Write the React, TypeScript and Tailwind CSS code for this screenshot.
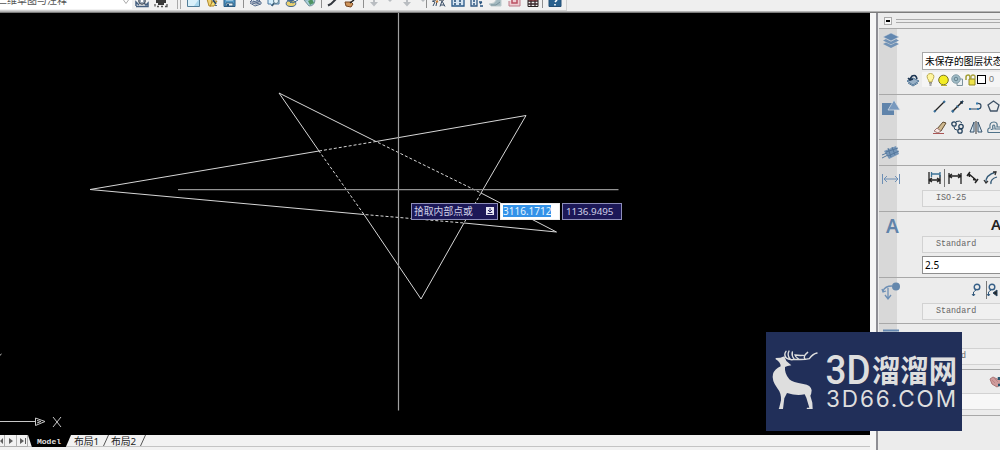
import type { ReactNode } from "react";

const cjk = "font-['Noto_Sans','Noto_Sans_CJK_SC',sans-serif]";
const mono = "font-['Liberation_Mono',monospace]";

function Icon({ w, h, className = "", children }: { w: number; h: number; className?: string; children: ReactNode }) {
  return (
    <svg
      width={w}
      height={h}
      viewBox={`0 0 ${w} ${h}`}
      fill="none"
      stroke="#27445f"
      className={`shrink-0 overflow-visible ${className}`}
    >
      {children}
    </svg>
  );
}

function Sep() {
  return <div className="h-[8px] w-px shrink-0 bg-[#8f8f8f]" />;
}

function Toolbar() {
  return (
    <header className="h-[13px] w-full shrink-0 overflow-hidden border-b border-[#7c7c7c] bg-[#efefef]">
      <div className="flex h-[12px] w-full border-b border-[#b4b4b4]">
      <div className="flex h-[11px] w-[567px] border-r border-b border-[#d0d0d0] bg-[#f1f1f1]">
        <div className="flex h-[9px] w-[132px] shrink-0 justify-between overflow-hidden bg-white">
          <span className={`-mt-[7px] -ml-[3px] text-[10px] leading-[14px] whitespace-nowrap text-[#555] ${cjk}`}>
            二维草图与注释
          </span>
          <Icon w={6} h={5} className="mr-[3px]">
            <path d="M0.5 0L3 3.5L5.5 0" stroke="#aaa" />
          </Icon>
        </div>
        <div className="flex w-[45px] shrink-0 gap-[5px] pl-[3px]">
          <Icon w={14} h={7}>
            <path d="M1 6.5H13V3L11 5L9 3M1 6V2L4 5" stroke="#466080" strokeWidth="1.5" />
            <circle cx="7" cy="1" r="3.3" fill="#9aa6b5" stroke="#39434f" />
            <path d="M6 0H8V2H6Z" fill="#fff" stroke="none" />
          </Icon>
          <Icon w={14} h={7}>
            <path d="M2 0H12V3H10V5H4V3H2Z" fill="#383838" stroke="none" />
            <path d="M1 4V6.5M3 6.5H5M7 6.5H9M11 6.5H13V4" stroke="#555" strokeWidth="1.3" />
          </Icon>
        </div>
        <div className="flex w-[66px] shrink-0">
          <Icon w={10} h={9}>
            <path d="M0.5 0V9M3.5 0V9" stroke="#aaa" />
          </Icon>
          <Icon w={14} h={7}>
            <path d="M0.5 -2H12.5V6.5H0.5Z" fill="#d9f0fa" stroke="#527e99" />
            <path d="M7 6H12V-1Z" fill="#a9d7ed" stroke="none" />
          </Icon>
          <Icon w={18} h={7} className="ml-[4px]">
            <path d="M2 -1H7L6 6H4Z" fill="#eed172" stroke="#b28b2e" />
            <path d="M5 6L8 1H12L9 6Z" fill="#f3df76" stroke="#ad852d" />
            <path d="M8 0L11 4M11 5V6" stroke="#24466b" strokeWidth="1.6" />
          </Icon>
          <Icon w={14} h={7}>
            <path d="M1 -2V6.5H12V-2" fill="#5499c5" stroke="#275b85" />
            <path d="M3 3H10V6H3Z" fill="#e9f3f8" stroke="#315b7b" />
            <path d="M5 4V6" stroke="#245580" strokeWidth="2" />
            <path d="M3 0H10" stroke="#d7e9f3" />
          </Icon>
        </div>
        <Sep />
        <div className="flex w-[77px] shrink-0 gap-[4px] pl-[5px]">
          <Icon w={14} h={7}>
            <path d="M1 2L4 -1H11L10 2Z" fill="#dae4ee" stroke="#57698c" />
            <path d="M1 3L6 6L12 4V2L7 0M3 3Q7 5 11 3M4 1L9 3" stroke="#536a8b" />
          </Icon>
          <Icon w={14} h={7}>
            <path d="M1 -1V4H4L5 6L6 4H12V-1" fill="#d6effc" stroke="#4878a2" />
            <circle cx="9" cy="1" r="2.5" fill="#eaf5f8" stroke="#55798c" />
            <path d="M7 3L5 6" stroke="#405e75" strokeWidth="1.5" />
          </Icon>
          <Icon w={14} h={7}>
            <ellipse cx="6" cy="3.5" rx="4.8" ry="3" fill="#ebd16f" stroke="#3e638e" />
            <path d="M2 0L8 3L13 0M5 3L11 -2" stroke="#376692" />
          </Icon>
          <Icon w={14} h={7}>
            <path d="M1 0L6 6Q12 6 12 -1Z" fill="#a8d0da" stroke="#718f9a" />
            <path d="M5 1L9 -1L11 3L7 5Z" fill="#4f9363" stroke="none" />
          </Icon>
        </div>
        <Sep />
        <div className="flex w-[41px] shrink-0 gap-[5px] pl-[6px]">
          <Icon w={12} h={7}>
            <path d="M0 5.5L3 4L8 -1" stroke="#31363d" strokeWidth="2" />
          </Icon>
          <Icon w={13} h={7}>
            <path d="M0 2H6L8 4L6 7L1 6Z" fill="#cf955b" stroke="#744421" />
            <path d="M5 3L9 0" stroke="#222" strokeWidth="1.5" />
          </Icon>
        </div>
        <Sep />
        <div className="flex w-[62px] shrink-0 gap-[11px] pl-[5px]">
          {[0, 1].map((n) => (
            <Icon key={n} w={22} h={7}>
              <path d="M1 2H9L5 6.5Z" fill="#b9bdc1" stroke="none" />
              <path d="M5 -1V3" stroke="#b9bdc1" strokeWidth="2" />
              <path d="M19 0H23L21 2Z" fill="#b9bdc1" stroke="none" />
            </Icon>
          ))}
        </div>
        <Sep />
        <div className="flex w-[115px] shrink-0 gap-[5px] pl-[5px]">
          <Icon w={14} h={7}>
            <path d="M0 1L3 2L1 6M5 1L4 6M8 6.5L10 1L13 6.5M9 5H12" stroke="#374b64" />
            <path d="M1 0H4M7 0H12" stroke="#555f6b" strokeWidth="1.5" />
            <path d="M4 2L6 1" stroke="#c77d35" strokeWidth="2" />
          </Icon>
          <Icon w={14} h={7}>
            <path d="M1 -1V6H13V-1" fill="#d5e4f2" stroke="#285888" strokeWidth="1.3" />
            <path d="M3 1H5M8 1H10M3 4H5M8 4H10" stroke="#254c75" strokeWidth="1.5" />
          </Icon>
          <Icon w={14} h={7}>
            <path d="M1 -1V6H7V-1" fill="#e0e9f2" stroke="#315882" strokeWidth="1.3" />
            <path d="M3 1H5M3 4H5M9 2H12M10 6H13M12 2L10 4" stroke="#29537f" strokeWidth="1.3" />
          </Icon>
          <Icon w={14} h={7}>
            <path d="M0 4L5 3L8 -1H12V6H2Z" fill="#a3b9c0" stroke="#bdcacd" />
            <path d="M2 5H7L11 2" stroke="#7a929c" />
          </Icon>
          <Icon w={14} h={7}>
            <path d="M1 1V6H12V-1" fill="#eecdd2" stroke="#bd7b88" />
            <path d="M4 -1V3H9V-1" stroke="#bb5062" strokeWidth="1.5" />
          </Icon>
          <Icon w={14} h={7}>
            <path d="M1 -1V6.5H11V-1" fill="#eee" stroke="#262020" />
            <path d="M1 1H11M1 4H11M4 -1V6M8 -1V6" stroke="#38272a" strokeWidth="1.3" />
            <path d="M2 0H10" stroke="#9b3038" />
          </Icon>
        </div>
        <Sep />
        <Icon w={14} h={7} className="ml-[6px]">
          <path d="M0 -2H12V6.5H0Z" fill="#29608d" stroke="#234e74" />
          <path d="M6 2L8 0M6 4V5.5" stroke="#fff" strokeWidth="1.6" />
        </Icon>
      </div>
      </div>
    </header>
  );
}

function Drawing() {
  return (
    <svg width="870" height="422" viewBox="0 13 870 422" fill="none" className="block">
      {/* star, the inner pentagon is the highlighted selection */}
      <g stroke="#d6d6d6" strokeWidth="1">
        <path d="M319 151L279 93L376 141.5L526 115.5L481 193L556.5 232L464 223L421 299L364 214.5L90 189.5L319 151" />
        <path d="M319 151L376 141.5L481 193L464 223L364 214.5Z" strokeDasharray="3 2" />
      </g>
      <path d="M398.5 13V410.5" stroke="#a0a0a0" strokeWidth="1.2" />
      <path d="M178 189.7H618.5" stroke="#929292" strokeWidth="1.3" />
      <g stroke="#c8c8c8">
        <path d="M0 421.5H35M35.5 418L45 421.5L35.5 425.5ZM37 420.5L41 421.5L37 423" />
        <path d="M53 417L61 427M61 417L53 427" />
        <path d="M-2 357L1.5 354" />
      </g>
    </svg>
  );
}

function DynamicInput() {
  return (
    <div className={`absolute top-[190px] left-[411px] flex h-[17px] gap-[2px] text-[10px] leading-[15px] ${cjk}`}>
      <div className="flex w-[87px] items-center justify-between border border-[#8d8dba] bg-[#1c1857] pr-[3px] pl-[2px] text-[#d0d0e8]">
        <span className="text-[9.8px] whitespace-nowrap">拾取内部点或</span>
        <Icon w={8} h={8} className="-mt-[2px]">
          <path d="M0 0H8V8H0Z" fill="#e6e6f4" stroke="none" />
          <path d="M4 1V4M2 3L4 5L6 3M1.5 6.5H6.5" stroke="#25205f" />
        </Icon>
      </div>
      <div className="flex w-[60px] items-center border border-[#eee] bg-white pl-[2px]">
        <span className="-mt-px h-[12px] bg-[#3392e8] leading-[12px] text-[#e8f6ff]">3116.1712</span>
      </div>
      <div className="w-[60px] border border-[#8d8dba] bg-[#1c1857] pl-[3px] text-[9.8px] text-[#d0d0e8]">
        1136.9495
      </div>
    </div>
  );
}

function LayoutTabs() {
  return (
    <div className={`flex h-[15px] w-full bg-[#f2f2f2] text-[9.8px] leading-[13px] text-[#222] ${cjk}`}>
      <div className="flex h-[12px] w-full border-b border-[#c4c4c4]">
        <Icon w={28} h={12}>
          <path d="M4.5 0V11.5M16.5 0V11.5M27.5 0V11.5M0 11.5H28" stroke="#b0b0b0" />
          <path d="M3 3V9L0 6ZM9 3V9L13 6ZM20 3V9L24 6Z" fill="#606060" stroke="none" />
          <path d="M25.5 3V9" stroke="#606060" />
        </Icon>
        <div
          className={`h-[12px] w-[43px] shrink-0 bg-black pl-[9px] text-[8px] leading-[13px] font-bold text-[#e2e2e2] [clip-path:polygon(0_0,100%_0,88%_100%,9%_100%)] ${mono}`}
        >
          Model
        </div>
        <span className="ml-[3px] w-[29px] whitespace-nowrap">布局1</span>
        <Icon w={6} h={12}>
          <path d="M5.5 0L0.5 11" stroke="#555" />
        </Icon>
        <span className="ml-[2px] w-[29px] whitespace-nowrap">布局2</span>
        <Icon w={6} h={12}>
          <path d="M5.5 0L0.5 11" stroke="#555" />
        </Icon>
      </div>
    </div>
  );
}

function Section({ height, icon, children }: { height: string; icon?: ReactNode; children?: ReactNode }) {
  return (
    <section className={`flex w-full shrink-0 overflow-hidden border-t border-[#a8a8a8] ${height}`}>
      <div className="w-[18px] shrink-0 bg-[#d8d8d8] pt-[4px] pl-[3px]">{icon}</div>
      <div className="min-w-0 flex-1 overflow-hidden">{children}</div>
    </section>
  );
}

function StyleBox({ children, className = "" }: { children?: ReactNode; className?: string }) {
  return (
    <div
      className={`ml-[25px] h-[17px] w-[90px] border border-[#d2d2d2] bg-[#f0f0f0] pl-[13px] text-[8.4px] leading-[15px] text-[#666] ${mono} ${className}`}
    >
      {children}
    </div>
  );
}

function LeaderIcon() {
  return (
    <Icon w={9} h={14}>
      <circle cx="5" cy="4" r="2.8" strokeWidth="1.4" stroke="#365f87" />
      <path d="M4 7L1.5 9V13M0 11L1.5 13L3 11" stroke="#33597c" />
    </Icon>
  );
}

function Palette() {
  return (
    <aside className="flex w-[122px] shrink-0 flex-col overflow-hidden bg-[#ececec]">
      <div className="flex h-[15px] shrink-0 items-center gap-[4px] pl-[6px]">
        <div className="flex h-[8px] w-[8px] items-center justify-center border border-[#aaa] bg-[#f6f6f6]">
          <div className="h-[2px] w-[4px] bg-black" />
        </div>
        <div className="h-[4px] flex-1 border-y border-[#aaa]" />
      </div>
      <div className="ml-px flex min-h-0 flex-1 flex-col">
        <Section
          height="h-[66px]"
          icon={
            <Icon w={18} h={16}>
              <path d="M1 11L9 15L17 11L14 9.5L9 12L4 9.5Z" fill="#7192b6" stroke="none" />
              <path d="M1 7.5L9 11.5L17 7.5L14 6L9 8.5L4 6Z" fill="#7192b6" stroke="none" />
              <path d="M1 4L9 0L17 4L9 8Z" fill="#6287b0" stroke="#d8dde3" strokeWidth="0.5" />
            </Icon>
          }
        >
          <div
            className={`mt-[23px] ml-[25px] h-[18px] w-[90px] border border-[#a7a7a7] bg-white pl-[2px] text-[9.7px] leading-[17px] whitespace-nowrap text-black ${cjk}`}
          >
            未保存的图层状态
          </div>
          <div className="mt-[2px] flex h-[15px] items-center">
            <Icon w={14} h={14} className="ml-[9px]">
              <path d="M1 8L7 5L13 8L7 12Z" fill="#99b1c7" stroke="#527899" />
              <path d="M2 10L7 13L12 10" stroke="#527899" />
              <path d="M11 6Q10 1 6 3L4 6M2 5L4 7L7 6" stroke="#1c3552" strokeWidth="1.6" />
            </Icon>
            <div className="ml-[2px] flex h-[15px] w-[81px] items-center bg-[#f5f5f5] pl-[4px]">
              <Icon w={9} h={13}>
                <path d="M3 9Q3 7 1.5 5.5Q0 1 4.5 0.5Q9 1 7.5 5.5Q6 7 6 9Z" fill="#fff59e" stroke="#b7a84e" />
                <path d="M3 10H6M3.5 12H5.5" stroke="#555" />
              </Icon>
              <Icon w={12} h={12} className="ml-[3px]">
                <circle cx="5.5" cy="6" r="4.8" fill="#f3ed25" stroke="#777228" />
                <path d="M3 11.5H9" stroke="#b7ae33" />
              </Icon>
              <Icon w={13} h={12} className="ml-[1px]">
                <path d="M6 5H11.5V11.5H6Z" fill="#e9eff2" stroke="#7c929c" />
                <circle cx="5" cy="5" r="4.2" fill="#a2bec9" stroke="#829ba5" />
                <circle cx="5" cy="5" r="1.8" stroke="#66838f" />
              </Icon>
              <Icon w={12} h={12} className="ml-[1px]">
                <path d="M1 6V3Q1 1 3.5 1Q5 1 5 4V6" stroke="#a29e34" strokeWidth="1.5" />
                <path d="M4 5H10V11H4Z" fill="#eee34b" stroke="#8f8725" />
                <path d="M6 5V2Q8 0 10 2V5" stroke="#a8a13e" strokeWidth="1.3" />
              </Icon>
              <div className="h-[9px] w-[9px] shrink-0 border border-black bg-white" />
              <span className="ml-[3px] text-[9px] text-[#777] font-['Liberation_Sans',sans-serif]">0</span>
            </div>
          </div>
        </Section>

        <Section
          height="h-[45px]"
          icon={
            <Icon w={18} h={15} className="mt-[2px]">
              <path d="M0 2H12V14H0Z" fill="#6084ab" stroke="none" />
              <path d="M12 -1L18 9H6Z" fill="#7899be" stroke="#dce2e8" strokeWidth="0.7" />
            </Icon>
          }
        >
          <div className="mt-[4px] ml-[36px] grid grid-cols-[18px_18px_18px_18px] gap-y-[7px]">
            <Icon w={14} h={14}>
              <path d="M2 12L11 3" stroke="#222" strokeWidth="1.3" />
              <path d="M1 13L2.5 11.5M10.5 3.5L12 2" stroke="#386f9a" strokeWidth="2.2" />
            </Icon>
            <Icon w={14} h={14}>
              <path d="M1 13L12 2" stroke="#222" strokeWidth="1.4" />
              <path d="M9 3L12 2L11 5" fill="#222" />
              <path d="M1 13L2.5 11.5M6 8L7 7" stroke="#386f9a" strokeWidth="2.5" />
            </Icon>
            <Icon w={14} h={14}>
              <path d="M1 10H9Q12 10 12 7Q12 4 8 4.5" stroke="#304961" strokeWidth="1.2" />
              <path d="M0 10H2M8 10H10M7 4.5H9" stroke="#397bab" strokeWidth="2" />
            </Icon>
            <Icon w={14} h={14}>
              <path d="M6.5 2L12 6L10 12H3.5L1 6Z" stroke="#405367" strokeWidth="1.3" />
            </Icon>
            <Icon w={14} h={14}>
              <path d="M4 9L10 2L13 3L8 11Z" fill="#cfb98f" stroke="#5e4b31" />
              <path d="M4 8L8 11L5 13L1 11Z" fill="#fae8e3" stroke="#a07c78" />
              <path d="M0 13.5H11" stroke="#a55" />
            </Icon>
            <Icon w={14} h={14}>
              <circle cx="3" cy="4" r="2.2" strokeWidth="1.3" />
              <circle cx="10" cy="6.5" r="2.2" strokeWidth="1.3" />
              <circle cx="9" cy="11" r="2.2" strokeWidth="1.3" />
              <path d="M5 1.5Q9 0 11 3M3 7Q3 10 6 10" />
            </Icon>
            <Icon w={14} h={14}>
              <path d="M5 2V12H1ZM9 2V12H13Z" fill="#dceaf2" stroke="#35516a" />
              <path d="M7 1V14" stroke="#333" />
            </Icon>
            <Icon w={14} h={14}>
              <path d="M1 12.5H13M1 12.5Q0 8 3 8Q2 2 7 2Q11 2 10 7H13M4 10Q4 9 6 9Q5 5 7 5Q8 5 8 9H13" stroke="#4f7289" strokeWidth="1.2" />
            </Icon>
          </div>
        </Section>

        <Section
          height="h-[26px]"
          icon={
            <Icon w={18} h={15} className="mt-[2px]">
              <path d="M2 5L14 0L17 8L7 13Z" fill="#7595b7" stroke="none" />
              <path d="M0 9L5 7M0 12L6 9M6 2L9 11M10 1L13 9M4 6L16 2M6 10L17 5" stroke="#55789d" />
            </Icon>
          }
        />

        <Section
          height="h-[46px]"
          icon={
            <Icon w={18} h={12} className="mt-[4px]">
              <path d="M0.5 0V10M17.5 0V10M2 5H16M5 2L2 5L5 8M13 2L16 5L13 8" stroke="#6d8fb5" />
            </Icon>
          }
        >
          <div className="mt-[4px] ml-[31px] flex h-[16px] items-center">
            <Icon w={13} h={14}>
              <path d="M1 1V13M12 4V13M1 9H12M4 7L1 9L4 11M9 7L12 9L9 11" stroke="#222" strokeWidth="1.3" />
              <path d="M3 3H12M3.5 1V6M12 1V6" stroke="#3a7196" strokeWidth="1.3" />
            </Icon>
            <div className="ml-[3px] h-[18px] w-px shrink-0 bg-[#777]" />
            <Icon w={14} h={14} className="ml-[3px]">
              <path d="M1 2V13M13 2V13M1 5H13M4 3L1 5L4 7M10 3L13 5L10 7" stroke="#222" strokeWidth="1.3" />
            </Icon>
            <Icon w={14} h={14} className="ml-[4px]">
              <path d="M3 3L10 9M1 5L4 1M9 12L12 8M3 3L3.5 6M10 9L7 8.5" stroke="#222" strokeWidth="1.5" />
            </Icon>
            <Icon w={14} h={14} className="ml-[4px]">
              <path d="M2 12Q1 4 12 1M7 13Q6 8 13 6" stroke="#355b78" strokeWidth="1.3" />
              <path d="M0 9L2 12L4 10M9 1H12L11 4" stroke="#333" strokeWidth="1.3" />
            </Icon>
          </div>
          <StyleBox className="mt-[4px]">ISO-25</StyleBox>
        </Section>

        <Section
          height="h-[66px]"
          icon={
            <div className="pl-[4px] text-[19px] leading-[20px] font-semibold text-[#6083aa] font-['Noto_Sans',sans-serif]">
              A
            </div>
          }
        >
          <div className="mt-[5px] ml-[94px] h-[15px] text-[15px] leading-[15px] font-semibold text-[#222] font-['Noto_Sans',sans-serif]">
            A
          </div>
          <StyleBox className="mt-[4px]">Standard</StyleBox>
          <div className="mt-[3px] ml-[25px] h-[18px] w-[90px] border border-[#8f8f8f] bg-white pl-[2px] text-[10px] leading-[17px] text-black font-['Noto_Sans',sans-serif]">
            2.5
          </div>
        </Section>

        <Section
          height="h-[46px]"
          icon={
            <Icon w={18} h={18}>
              <circle cx="14" cy="4.5" r="4" fill="#6588ad" stroke="none" />
              <path d="M10 4Q3 4 1 9M0 7L1 10L4 9M6 6V16M3 13L6 17L9 13" stroke="#6d8fb5" strokeWidth="1.3" />
            </Icon>
          }
        >
          <div className="mt-[3px] ml-[75px] flex h-[18px] items-center">
            <LeaderIcon />
            <div className="ml-[5px] h-[18px] w-px shrink-0 bg-[#777]" />
            <LeaderIcon />
            <Icon w={6} h={14} className="-ml-[3px]">
              <path d="M0 10L4 7V13Z" fill="#222" />
            </Icon>
          </div>
          <StyleBox className="mt-[4px]">Standard</StyleBox>
        </Section>

        <Section
          height="h-[46px]"
          icon={
            <Icon w={18} h={16}>
              <path d="M1 1.5H17V3.5H1Z" fill="#6588b0" stroke="none" />
              <path d="M1 5H17V14H1ZM6 5V14M12 5V14M1 9H17" stroke="#8ba5c0" />
            </Icon>
          }
        >
          <StyleBox className="mt-[24px] pl-[38px]!">d</StyleBox>
        </Section>

        <Section height="h-[46px]">
          <Icon w={14} h={14} className="mt-[5px] ml-[92px]">
            <path d="M1 4L4 2L8 4L12 5L11 10L8 12L3 9Z" fill="#cf9b9b" stroke="#aa7777" />
            <path d="M3 5L6 8M5 3L9 7" stroke="#b98585" />
            <path d="M10 2V5M9 10H14" stroke="#265670" strokeWidth="2.5" />
          </Icon>
          <div className="mt-[4px] ml-[25px] h-[17px] w-[90px] border border-[#d2d2d2] bg-[#f7f7f7]" />
        </Section>
        <div className="flex-1 border-t border-[#a8a8a8]" />
      </div>
    </aside>
  );
}

function Watermark() {
  return (
    <div className="absolute top-[332px] left-[766px] h-[99px] w-[196px] bg-[#212f59]">
      <svg width="196" height="98" viewBox="0 0 196 98" fill="#dedede" className="block">
        <g transform="translate(-11 -7) scale(.33333)">
          <path d="M62 99L76 98L88 94L94 108L109 121Q96 123 90 126Q88 145 103 163Q113 173 145 177Q168 180 170 196Q169 209 166 212L172 233L173 252H155L156 248H163L154 218L149 208Q126 214 96 204L88 220L84 252H71L73 247L78 226Q79 204 67 190Q49 165 54 147Q59 132 77 124Q77 112 62 103Z" />
          <path
            d="M91 97Q103 107 119 103Q147 105 163 101Q174 86 186 84M95 100Q85 90 93 79M106 103Q95 91 102 78M118 103Q109 92 112 81M131 102Q121 96 120 90Q132 92 145 91M150 102Q143 94 158 82"
            fill="none"
            stroke="#dedede"
            strokeWidth="4.2"
            strokeLinecap="round"
          />
        </g>
        <text x="59.5" y="52" fontFamily="Roboto, sans-serif" fontSize="41" fontWeight="500" textLength="45" lengthAdjust="spacingAndGlyphs">
          3D
        </text>
        <text x="106" y="50" fontFamily="'Noto Sans CJK SC', sans-serif" fontSize="31" fontWeight="700" textLength="85" lengthAdjust="spacingAndGlyphs">
          溜溜网
        </text>
        <text x="60" y="75" fontFamily="Inter, sans-serif" fontSize="22.5" textLength="130" lengthAdjust="spacing">
          3D66.COM
        </text>
      </svg>
    </div>
  );
}

export default function App() {
  return (
    <div className="relative flex h-[450px] w-[1000px] flex-col overflow-hidden bg-[#efefef]">
      <Toolbar />
      <div className="flex min-h-0 flex-1">
        <main className="relative flex w-[870px] shrink-0 flex-col">
          <div className="h-[422px] bg-black">
            <Drawing />
          </div>
          <LayoutTabs />
          <DynamicInput />
        </main>
        <div className="w-[8px] shrink-0 border-r-2 border-[#8e8e94] bg-[#f6f6f6]" />
        <Palette />
      </div>
      <Watermark />
    </div>
  );
}
